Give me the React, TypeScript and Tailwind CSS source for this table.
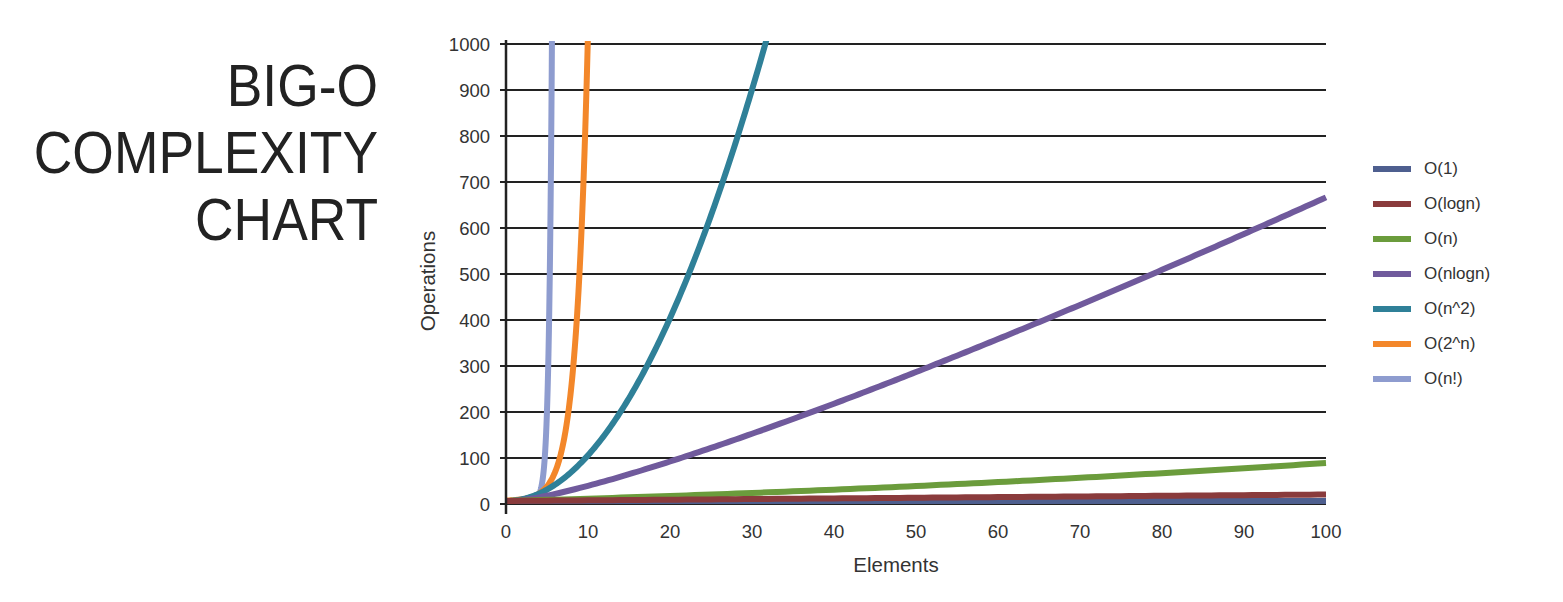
const X = (u: number) => 506 + 8.2 * u
const Y = (v: number) => 501 - 0.457 * v
const gridY = (t: number) => 504 - 0.46 * t

type Series = { label: string; color: string; points: string }

const build = (from: number, to: number, step: number, fy: (u: number) => number) => {
  const pts: string[] = []
  for (let u = from; u <= to + 1e-9; u += step) {
    const y = fy(u)
    pts.push(`${X(u).toFixed(2)},${y.toFixed(2)}`)
    if (y < 40) break
  }
  return pts.join(" ")
}

const series: Series[] = [
  { label: "O(1)", color: "#4e5f8f", points: build(0, 100, 1, () => 501) },
  { label: "O(logn)", color: "#8a3b3c", points: build(0, 100, 1, (u) => 501 - 0.065 * u) },
  { label: "O(n)", color: "#6b9c3c", points: build(0, 100, 1, (u) => 501 - 0.219 * u - 0.00161 * u * u) },
  {
    label: "O(nlogn)",
    color: "#705a9c",
    points: build(0, 100, 0.5, (u) => Y(u > 1 ? u * Math.log2(u) : 0)),
  },
  { label: "O(n^2)", color: "#2f8098", points: build(0, 33, 0.2, (u) => Y(u * u)) },
  { label: "O(2^n)", color: "#f3872a", points: build(0, 11, 0.04, (u) => Y(Math.pow(2, u))) },
  {
    label: "O(n!)",
    color: "#8e9ccf",
    points: build(0, 6, 0.02, (u) => Y(Math.exp(6.91 + 2.7 * (u - 5.6)))),
  },
]

// drawn back to front, red ends up over the rest near the origin
const drawOrder = ["O(n!)", "O(2^n)", "O(n^2)", "O(nlogn)", "O(n)", "O(1)", "O(logn)"]

const yTicks = [1000, 900, 800, 700, 600, 500, 400, 300, 200, 100, 0]
const xTicks = [0, 10, 20, 30, 40, 50, 60, 70, 80, 90, 100]

const font = "'Liberation Sans', Arial, sans-serif"

const Chart = () => {
  return (
    <svg className="shrink-0 ml-[22px]" width={960} height={602} viewBox="400 0 960 602">
      <defs>
        <clipPath id="plot">
          <rect x={500} y={41} width={830} height={470} />
        </clipPath>
      </defs>

      {yTicks.map((t) => {
        const y = gridY(t)
        return (
          <g key={t}>
            <line x1={500} x2={1326} y1={y} y2={y} stroke="#222" strokeWidth={2} />
            <text x={490} y={y} textAnchor="end" dominantBaseline="central" fontSize={18.5} fill="#333" fontFamily={font}>
              {t}
            </text>
          </g>
        )
      })}

      {xTicks.map((t) => (
        <text key={t} x={X(t)} y={531} textAnchor="middle" dominantBaseline="central" fontSize={18.5} fill="#333" fontFamily={font}>
          {t}
        </text>
      ))}

      <g clipPath="url(#plot)">
        {drawOrder.map((name) => {
          const s = series.find((x) => x.label === name)!
          return (
            <polyline
              key={name}
              points={s.points}
              fill="none"
              stroke={s.color}
              strokeWidth={6}
              strokeLinejoin="round"
            />
          )
        })}
      </g>

      <line x1={506} x2={506} y1={40} y2={514} stroke="#222" strokeWidth={2.5} />

      <text x={896} y={564} textAnchor="middle" dominantBaseline="central" fontSize={20.5} fill="#333" fontFamily={font}>
        Elements
      </text>
      <text
        x={427}
        y={281}
        textAnchor="middle"
        dominantBaseline="central"
        fontSize={20.5}
        fill="#333"
        fontFamily={font}
        transform="rotate(-90 427 281)"
      >
        Operations
      </text>
    </svg>
  )
}

export default function App() {
  return (
    <div className="flex h-[602px] w-[1563px] bg-white font-['Liberation_Sans',Arial,sans-serif]">
      <div className="flex w-[378px] shrink-0 flex-col items-end pt-[52px] text-[60px] leading-[67px] text-[#222] origin-right scale-x-[0.89]">
        <div className="whitespace-nowrap">BIG-O</div>
        <div className="whitespace-nowrap">COMPLEXITY</div>
        <div className="whitespace-nowrap">CHART</div>
      </div>

      <Chart />

      <div className="ml-[13px] flex flex-col pt-[151px]">
        {series.map((s) => (
          <div key={s.label} className="flex h-[35px] items-center gap-[13px]">
            <div className="h-[6px] w-[38px]" style={{ backgroundColor: s.color }} />
            <span className="text-[17px] text-[#333]">{s.label}</span>
          </div>
        ))}
      </div>
    </div>
  )
}
